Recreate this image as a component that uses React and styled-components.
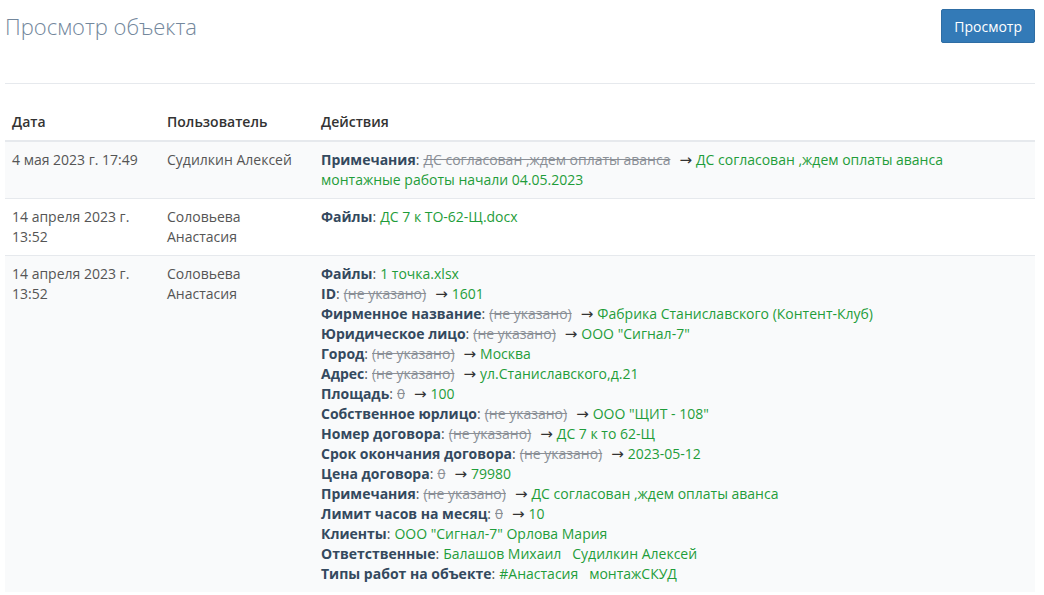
import React from 'react';
import styled, { createGlobalStyle } from 'styled-components';

const GlobalStyle = createGlobalStyle`
  body {
    margin: 0;
    background: #fff;
    font-family: "Open Sans", "Liberation Sans", sans-serif;
    font-size: 14px;
    line-height: 20px;
    color: #34495e;
  }
`;

const Page = styled.div`
  padding: 0 9px 0 5px;
`;

const Header = styled.div`
  display: flex;
  justify-content: space-between;
  align-items: flex-start;
  padding-top: 9px;
  height: 74px;
  border-bottom: 1px solid #e6e9ed;
`;

const Title = styled.h3`
  margin: 2px 0 0;
  font-size: 22px;
  font-weight: 300;
  line-height: 30px;
  color: #73879c;
`;

const Button = styled.button`
  background: #337ab7;
  border: 1px solid #2e6da4;
  color: #fff;
  font-family: inherit;
  font-size: 14px;
  height: 34px;
  padding: 0 12px;
  border-radius: 2px;
  cursor: pointer;
`;

const Table = styled.table`
  width: 100%;
  margin-top: 20px;
  border-collapse: collapse;
  table-layout: fixed;
`;

const Th = styled.th`
  text-align: left;
  font-weight: 600;
  color: #333;
  padding: 8px 7px;
  vertical-align: bottom;
  border-bottom: 2px solid #e6e9ed;
  width: ${(p) => p.$w || 'auto'};
`;

const Tr = styled.tr`
  background: ${(p) => (p.$striped ? '#f9fafb' : '#fff')};
`;

const Td = styled.td`
  padding: 8px 7px;
  vertical-align: top;
  border-top: 1px solid #e6e9ed;
  color: #555;
`;

const Line = styled.div`
  white-space: pre-wrap;
`;

const Label = styled.b`
  font-weight: 700;
  color: #34495e;
`;

const Old = styled.del`
  color: #8a8f96;
  margin: 0 9px 0 4px;
`;

const New = styled.span`
  color: #1f9d3a;
  margin-left: ${(p) => (p.$gap ? '4px' : '0')};
`;

const Arrow = styled.span`
  font-family: "DejaVu Sans", sans-serif;
  font-size: 15px;
  line-height: 1;
  color: #333;
  margin-right: 4px;
`;

const rows = [
  {
    date: '4 мая 2023 г. 17:49',
    user: 'Судилкин Алексей',
    striped: true,
    items: [
      {
        label: 'Примечания',
        old: 'ДС согласован ,ждем оплаты аванса',
        value: 'ДС согласован ,ждем оплаты аванса\nмонтажные работы начали 04.05.2023',
      },
    ],
  },
  {
    date: '14 апреля 2023 г. 13:52',
    user: 'Соловьева Анастасия',
    items: [{ label: 'Файлы', value: 'ДС 7 к ТО-62-Щ.docx' }],
  },
  {
    date: '14 апреля 2023 г. 13:52',
    user: 'Соловьева Анастасия',
    striped: true,
    items: [
      { label: 'Файлы', value: '1 точка.xlsx' },
      { label: 'ID', old: '(не указано)', value: '1601' },
      { label: 'Фирменное название', old: '(не указано)', value: 'Фабрика Станиславского (Контент-Клуб)' },
      { label: 'Юридическое лицо', old: '(не указано)', value: 'ООО "Сигнал-7"' },
      { label: 'Город', old: '(не указано)', value: 'Москва' },
      { label: 'Адрес', old: '(не указано)', value: 'ул.Станиславского,д.21' },
      { label: 'Площадь', old: '0', value: '100' },
      { label: 'Собственное юрлицо', old: '(не указано)', value: 'ООО "ЩИТ - 108"' },
      { label: 'Номер договора', old: '(не указано)', value: 'ДС 7 к то 62-Щ' },
      { label: 'Срок окончания договора', old: '(не указано)', value: '2023-05-12' },
      { label: 'Цена договора', old: '0', value: '79980' },
      { label: 'Примечания', old: '(не указано)', value: 'ДС согласован ,ждем оплаты аванса' },
      { label: 'Лимит часов на месяц', old: '0', value: '10' },
      { label: 'Клиенты', value: 'ООО "Сигнал-7" Орлова Мария' },
      { label: 'Ответственные', value: 'Балашов Михаил   Судилкин Алексей' },
      { label: 'Типы работ на объекте', value: '#Анастасия   монтажСКУД' },
    ],
  },
];

const App = () => (
  <Page>
    <GlobalStyle />
    <Header>
      <Title>Просмотр объекта</Title>
      <Button>Просмотр</Button>
    </Header>
    <Table>
      <thead>
        <tr>
          <Th $w="141px">Дата</Th>
          <Th $w="140px">Пользователь</Th>
          <Th>Действия</Th>
        </tr>
      </thead>
      <tbody>
        {rows.map((row, i) => (
          <Tr key={i} $striped={row.striped}>
            <Td>{row.date}</Td>
            <Td>{row.user}</Td>
            <Td>
              {row.items.map((it, j) => (
                <Line key={j}>
                  <Label>{it.label}</Label>:
                  {it.old ? (
                    <>
                      <Old>{it.old}</Old>
                      <Arrow>→</Arrow>
                      <New>{it.value}</New>
                    </>
                  ) : (
                    <New $gap>{it.value}</New>
                  )}
                </Line>
              ))}
            </Td>
          </Tr>
        ))}
      </tbody>
    </Table>
  </Page>
);

export default App;
